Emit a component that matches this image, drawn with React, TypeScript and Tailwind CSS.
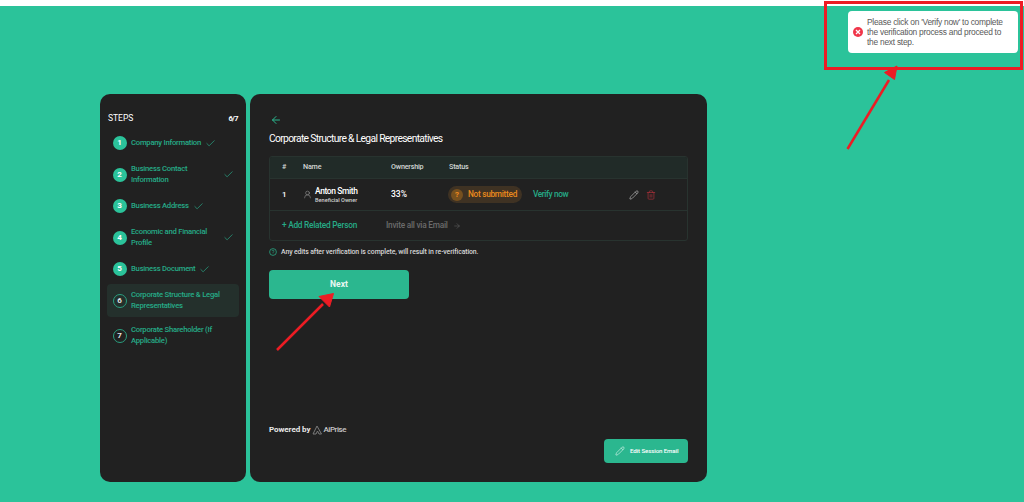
import React from "react";
import { ArrowLeft, ArrowRight, Check, Pencil, Trash2, UserRound } from "lucide-react";

const steps = [
  { n: 1, label: "Company Information", done: true, h: "h-[25px]", checkAfter: true },
  { n: 2, label: "Business Contact Information", done: true, h: "h-[33px]", checkAfter: false },
  { n: 3, label: "Business Address", done: true, h: "h-[25px]", checkAfter: true },
  { n: 4, label: "Economic and Financial Profile", done: true, h: "h-[33px]", checkAfter: false },
  { n: 5, label: "Business Document", done: true, h: "h-[25px]", checkAfter: true },
  { n: 6, label: "Corporate Structure & Legal Representatives", done: false, h: "h-[33px]", active: true },
  { n: 7, label: "Corporate Shareholder (If Applicable)", done: false, h: "h-[33px]" },
];

function StepRow({ s }: { s: (typeof steps)[number] }) {
  return (
    <div className={`flex items-center pl-[5px] pr-[3px] rounded-[4px] ${s.h} ${s.active ? "bg-[#24302c]" : ""}`}>
      {s.done ? (
        <div className="w-[14px] h-[14px] ml-[0.5px] rounded-full bg-[#2bc39a] text-white flex items-center justify-center text-[8px] font-bold shrink-0">
          {s.n}
        </div>
      ) : (
        <div className="w-[14px] h-[14px] ml-[0.5px] rounded-full border border-[#2a9f7f] text-[#e4e4e4] flex items-center justify-center text-[8px] font-bold shrink-0">
          {s.n}
        </div>
      )}
      <div
        className={`ml-[4.5px] text-[7.7px] font-medium tracking-[-0.25px] leading-[10.8px] text-[#26ab87] ${
          s.checkAfter ? "" : "flex-1 pr-[6px]"
        }`}
      >
        {s.label}
      </div>
      {s.done && (
        <Check
          size={11}
          strokeWidth={1.25}
          className={`text-[#2bc39a] shrink-0 ${s.checkAfter ? "ml-[4px]" : "mr-[2px]"}`}
        />
      )}
    </div>
  );
}

export default function App() {
  return (
    <div className="relative w-[1024px] h-[502px] overflow-hidden bg-[#2bc39a] font-['Roboto',sans-serif]">
      <div className="h-[6px] bg-white" />
      <div className="flex gap-[4px] pl-[100px] pt-[88px]">
        {/* Sidebar */}
        <aside className="w-[146px] h-[388px] rounded-[10px] bg-[#212121] px-[7px] pt-[20px]">
          <div className="flex items-center justify-between text-white h-[9px] px-[1px]">
            <span className="text-[8.5px] font-normal">STEPS</span>
            <span className="text-[7.5px] font-bold tracking-[-0.6px]">6/7</span>
          </div>
          <div className="flex flex-col gap-[2.5px] mt-[7.5px]">
            {steps.map((s) => (
              <StepRow key={s.n} s={s} />
            ))}
          </div>
        </aside>

        {/* Main */}
        <main className="w-[457px] h-[388px] rounded-[10px] bg-[#212121] pl-[19px] pr-[19px] pt-[20px] flex flex-col">
          <ArrowLeft size={12} strokeWidth={2} className="text-[#2bb78f] ml-[1px]" />
          <h1 className="mt-[7px] text-[10.3px] tracking-[-0.67px] leading-[12px] font-normal text-white">
            Corporate Structure &amp; Legal Representatives
          </h1>
          <div className="mt-[11px] h-[85px] rounded-[3px] border border-[#28332f] overflow-hidden flex flex-col">
            <div className="h-[22px] shrink-0 bg-[#212b28] border-b border-[#28332f] flex items-center text-[7.2px] font-medium tracking-[-0.2px] text-[#d2d6d4]">
              <span className="ml-[12px] w-[21px]">#</span>
              <span className="w-[88px]">Name</span>
              <span className="w-[58px]">Ownership</span>
              <span>Status</span>
            </div>
            <div className="h-[32px] shrink-0 border-b border-[#28332f] flex items-center">
              <span className="ml-[12px] w-[21px] text-[8px] font-medium text-white">1</span>
              <div className="w-[88px] flex items-center">
                <UserRound size={9} strokeWidth={1.25} className="text-[#b0b0b0] mr-[3px]" />
                <div className="flex flex-col">
                  <span className="text-[8.5px] leading-[10px] font-medium tracking-[-0.4px] text-white">Anton Smith</span>
                  <span className="text-[5.6px] leading-[8px] font-medium text-[#d0d0d0]">Beneficial Owner</span>
                </div>
              </div>
              <span className="w-[57px] text-[8.5px] font-medium text-white">33%</span>
              <div className="w-[74px] h-[17px] rounded-full bg-[#3f3223] flex items-center pl-[3px]">
                <span className="w-[12px] h-[12px] rounded-full bg-[#76501f] text-[#f08a1d] text-[8px] font-bold flex items-center justify-center">
                  ?
                </span>
                <span className="ml-[5px] text-[8.3px] font-medium tracking-[-0.3px] text-[#ea8a1d]">Not submitted</span>
              </div>
              <span className="ml-[11px] text-[8.3px] font-medium tracking-[-0.4px] text-[#26ab87]">Verify now</span>
              <Pencil size={10} strokeWidth={1.5} className="ml-[61px] text-[#c4c4c4]" />
              <Trash2 size={10} strokeWidth={1.5} className="ml-[7px] text-[#b5313c]" />
            </div>
            <div className="flex-1 flex items-center">
              <span className="ml-[12px] text-[8.3px] font-medium tracking-[-0.25px] text-[#26ab87]">+ Add Related Person</span>
              <span className="ml-[29px] text-[8.3px] font-medium tracking-[-0.25px] text-[#6b6b6b]">Invite all via Email</span>
              <ArrowRight size={8} strokeWidth={1.5} className="ml-[5px] text-[#6b6b6b]" />
            </div>
          </div>
          <div className="mt-[6px] h-[10px] flex items-center">
            <svg width="8" height="8" viewBox="0 0 8 8" className="text-[#2bb78f]" fill="none">
              <circle cx="4" cy="4" r="3.4" stroke="currentColor" strokeWidth="0.7" />
              <path d="M3 3.1a1 1 0 1 1 1.4 1L4 4.5v.4M4 5.7v.3" stroke="currentColor" strokeWidth="0.6" />
            </svg>
            <span className="ml-[4px] text-[6.9px] font-medium tracking-[-0.11px] text-[#d6d6d6]">
              Any edits after verification is complete, will result in re-verification.
            </span>
          </div>
          <button className="mt-[13px] w-[140px] h-[29px] rounded-[4px] bg-[#2bb78f] text-[#e8f7f2] text-[8.5px] font-bold">
            Next
          </button>
          <div className="mt-[125px] h-[12px] flex items-center text-[8px] font-bold tracking-[-0.05px] text-[#e8e8e8]">
            <span>Powered by</span>
            <svg width="10" height="10" viewBox="0 0 10 10" className="ml-[2px] text-[#7a7a7a]" fill="none">
              <path d="M5 1 1 9h3l1.5-3L7 9h2.5L5 1Z" stroke="currentColor" strokeWidth="1" />
            </svg>
            <span className="ml-[1px] font-medium tracking-[-0.45px] text-[#c8c8c8]">AiPrise</span>
          </div>
          <div className="mt-[3px] flex justify-end">
            <button className="w-[84px] h-[24px] rounded-[4px] bg-[#2bb78f] flex items-center pl-[11px] text-white">
              <Pencil size={10} strokeWidth={1.25} />
              <span className="ml-[5px] text-[6.1px] font-medium tracking-[-0.1px] whitespace-nowrap">Edit Session Email</span>
            </button>
          </div>
        </main>
      </div>

      {/* Toast */}
      <div className="absolute left-[848px] top-[11px] w-[170px] h-[42px] rounded-[4px] bg-white flex items-center pl-[5px]">
        <div className="w-[10px] h-[10px] rounded-full bg-[#f0364a] text-white flex items-center justify-center shrink-0">
          <svg width="6" height="6" viewBox="0 0 6 6" fill="none">
            <path d="M1 1l4 4M5 1 1 5" stroke="currentColor" strokeWidth="1.3" />
          </svg>
        </div>
        <p className="ml-[4px] w-[145px] font-['Liberation_Sans',sans-serif] text-[8.4px] tracking-[-0.25px] leading-[10.2px] text-[#595959]">
          Please click on 'Verify now' to complete the verification process and proceed to the next step.
        </p>
      </div>

      {/* Annotations */}
      <div className="absolute left-[824px] top-[1px] w-[199px] h-[69px] border-[3px] border-[#ed1c24]" />
      <svg className="absolute left-0 top-0 pointer-events-none" width="1024" height="502" viewBox="0 0 1024 502" fill="none">
        <path d="M847.5 149 889 80" stroke="#ed1c24" strokeWidth="2.5" />
        <path d="M897 66 884.5 72.5 894.5 79.5Z" fill="#ed1c24" stroke="#ed1c24" strokeWidth="1" />
        <path d="M277 350 323 304" stroke="#ed1c24" strokeWidth="2.5" />
        <path d="M333.5 293.5 319 296.5 329.5 307Z" fill="#ed1c24" stroke="#ed1c24" strokeWidth="1" />
      </svg>
    </div>
  );
}
